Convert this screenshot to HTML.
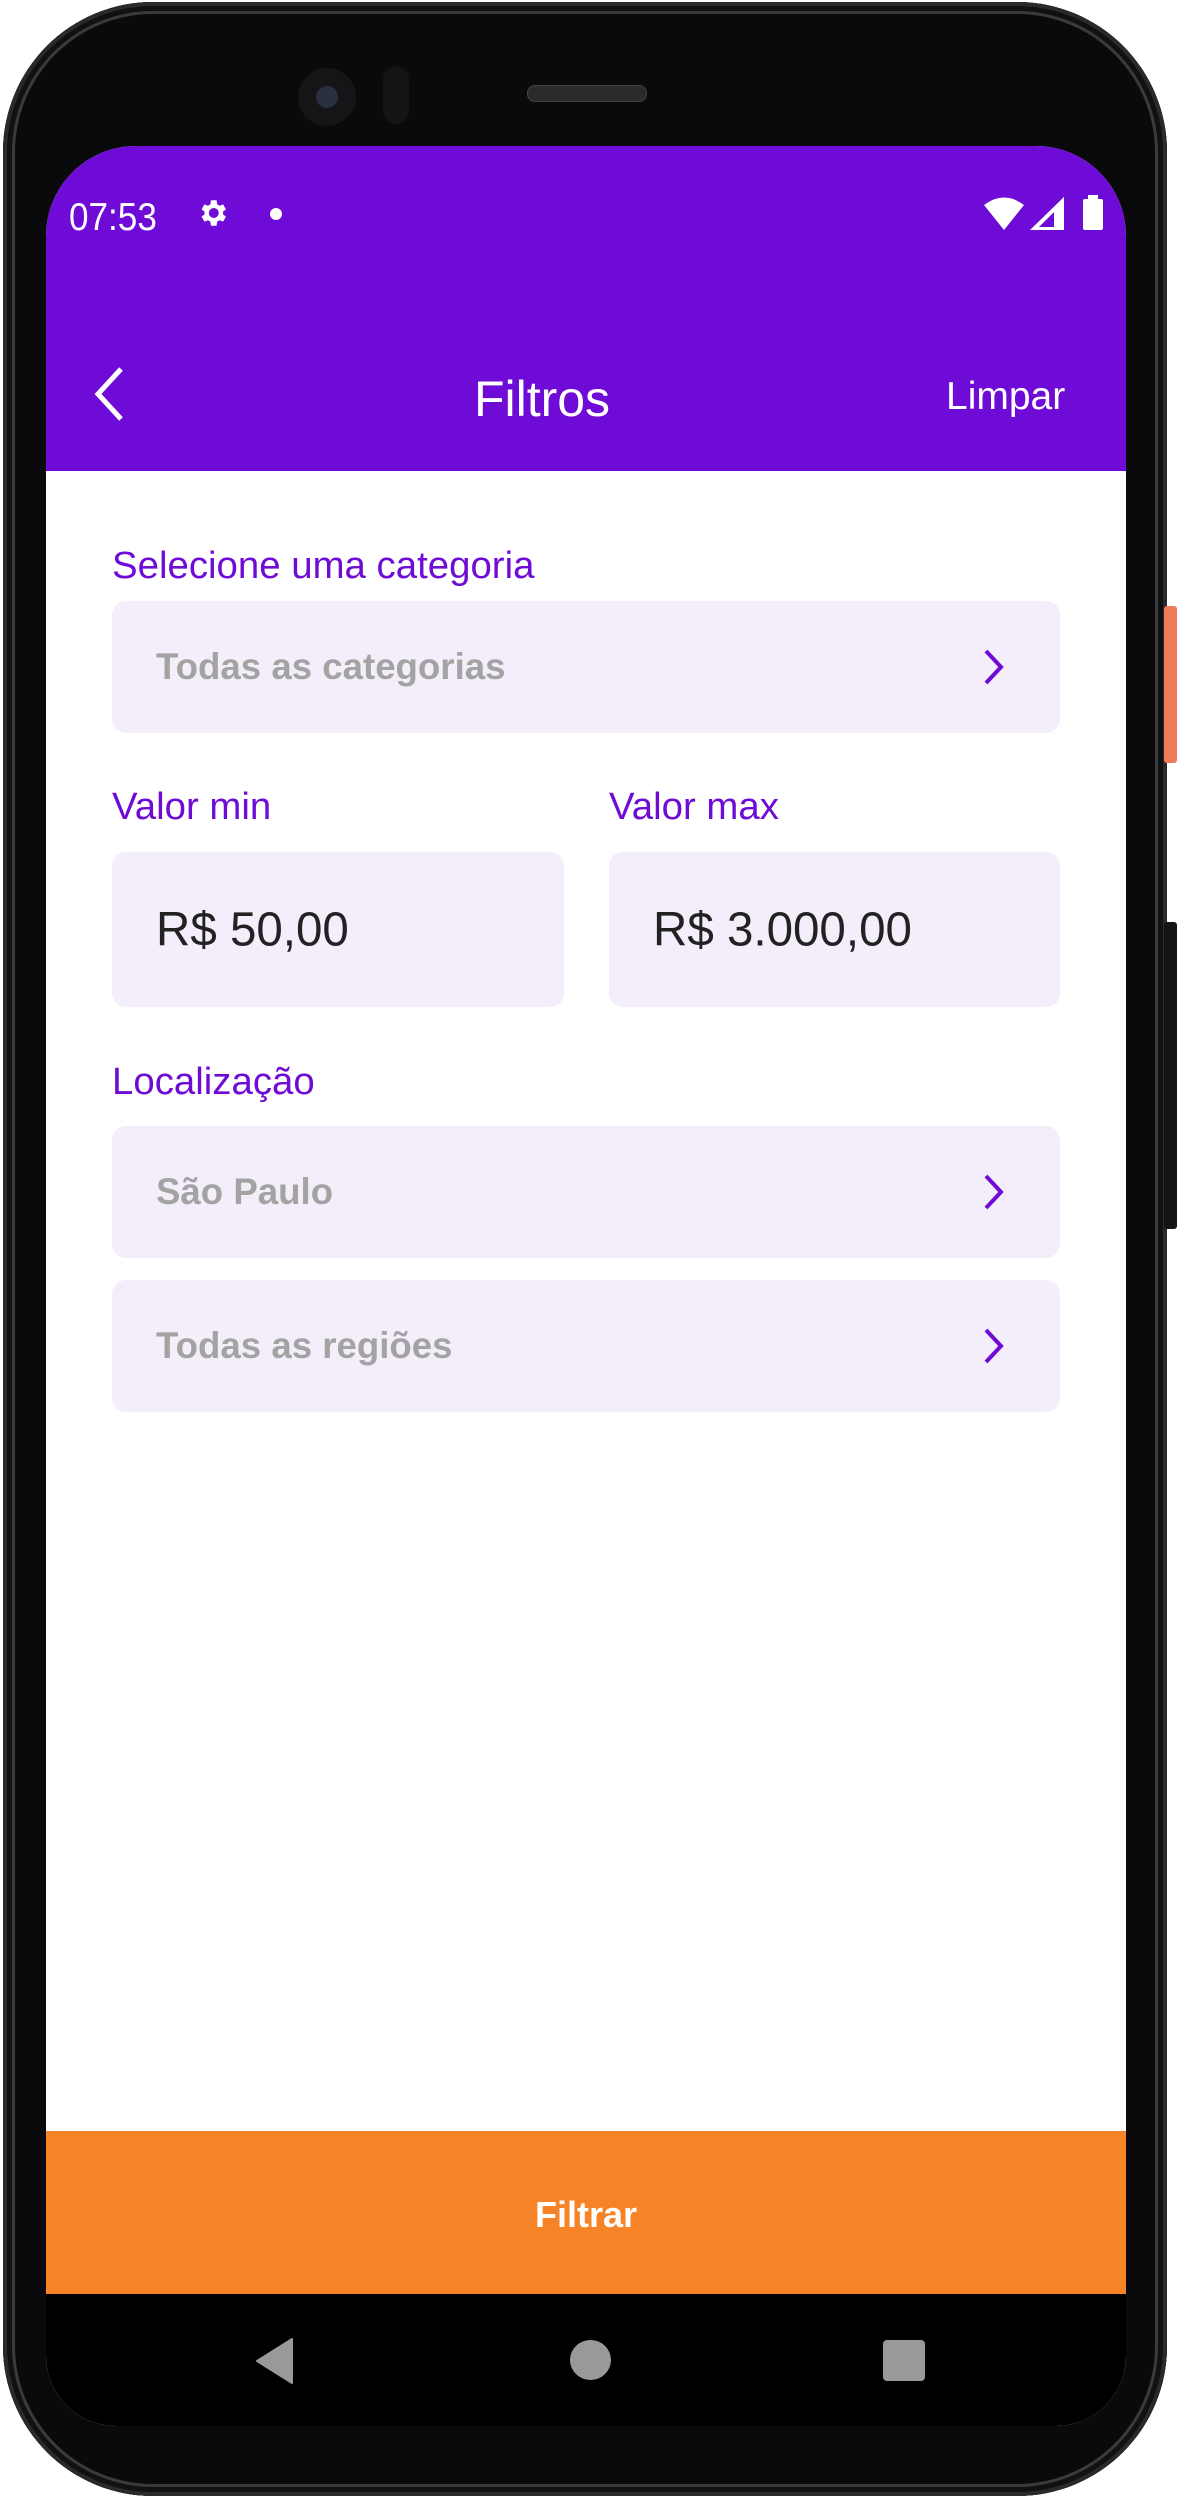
<!DOCTYPE html>
<html><head><meta charset="utf-8"><style>
*{margin:0;padding:0;box-sizing:border-box}
html,body{width:1178px;height:2498px;background:#fff;overflow:hidden;position:relative;font-family:"Liberation Sans",sans-serif}
.abs{position:absolute}
.phone{left:3px;top:2px;width:1164px;height:2494px;border-radius:150px;background:#0a090b;box-shadow:inset 0 0 0 4px #2a2a2c,inset 0 0 0 9px #111,inset 0 0 0 12px #3a3a3c}
.screen{left:46px;top:146px;width:1080px;height:2280px;border-radius:90px 90px 70px 70px;overflow:hidden;background:#fff}
.lbl{position:absolute;color:#6f0bd6;font-size:38px;transform:scaleX(1.01);transform-origin:left center}
.box{position:absolute;background:#f3eefa;border-radius:14px}
.ph{position:absolute;left:44px;top:50%;transform:translateY(-50%) scaleX(.99);transform-origin:left center;color:#a3a3a3;font-size:37px;font-weight:bold;white-space:nowrap}
.val{position:absolute;left:44px;top:50%;transform:translateY(-50%) scaleX(.99);transform-origin:left center;color:#222;font-size:48px;white-space:nowrap}
.chev{position:absolute;right:55px;top:50%;margin-top:-19px}
</style></head><body>
<div class="abs phone"></div>
<div class="abs" style="left:1164px;top:606px;width:13px;height:157px;background:#ef7b5a;border-radius:3px"></div>
<div class="abs" style="left:1164px;top:922px;width:13px;height:307px;background:#141414;border-radius:3px"></div>
<div class="abs" style="left:298px;top:68px;width:58px;height:58px;border-radius:50%;background:#151518"></div>
<div class="abs" style="left:316px;top:86px;width:22px;height:22px;border-radius:50%;background:#2a3040"></div>
<div class="abs" style="left:383px;top:66px;width:26px;height:58px;border-radius:13px;background:#141416"></div>
<div class="abs" style="left:527px;top:85px;width:120px;height:17px;border-radius:8px;background:#2a2a2c;border:1px solid #444"></div>

<div class="abs screen">
  <div class="abs" style="left:0;top:0;width:1080px;height:325px;background:#6f0bd6"></div>
  <div class="abs" style="left:23px;top:50px;color:#fff;font-size:39px;transform:scaleX(.9);transform-origin:left">07:53</div>
  <svg class="abs" style="left:148px;top:50px" width="37" height="34" viewBox="0 0 24 24"><path fill="#fff" d="M19.4 13a7.5 7.5 0 0 0 0-2l2.1-1.6-2-3.5-2.5 1a7 7 0 0 0-1.7-1L14.9 3h-4l-.4 2.9a7 7 0 0 0-1.7 1l-2.5-1-2 3.5L6.4 11a7.5 7.5 0 0 0 0 2l-2.1 1.6 2 3.5 2.5-1a7 7 0 0 0 1.7 1l.4 2.9h4l.4-2.9a7 7 0 0 0 1.7-1l2.5 1 2-3.5zM12.9 15.5a3.5 3.5 0 1 1 0-7 3.5 3.5 0 0 1 0 7z"/></svg>
  <div class="abs" style="left:224px;top:62px;width:12px;height:12px;border-radius:50%;background:#fff"></div>
  <svg class="abs" style="left:937px;top:50px" width="42" height="34" viewBox="0 0 42 34"><path fill="#fff" d="M21 34 1 9Q21-6 41 9z"/></svg>
  <svg class="abs" style="left:984px;top:51px" width="34" height="33" viewBox="0 0 34 33"><path fill="#fff" d="M34 0V33H0zM31 8 9 30H31z"/><path fill="#fff" d="M34 0V33H24V11z"/></svg>
  <div class="abs" style="left:1037px;top:53px;width:20px;height:31px;background:#fff;border-radius:2px"></div>
  <div class="abs" style="left:1042px;top:49px;width:10px;height:5px;background:#fff"></div>

  <svg class="abs" style="left:44px;top:220px" width="36" height="56" viewBox="0 0 36 56"><path d="M31 3 8 28l23 25" fill="none" stroke="#fff" stroke-width="5"/></svg>
  <div class="abs" style="left:396px;top:224px;width:200px;text-align:center;color:#fff;font-size:50px">Filtros</div>
  <div class="abs" style="left:900px;top:229px;color:#fff;font-size:39px">Limpar</div>

  <div class="lbl" style="left:66px;top:399px">Selecione uma categoria</div>
  <div class="box" style="left:66px;top:455px;width:948px;height:132px"><div class="ph">Todas as categorias</div><svg class="chev" width="22" height="38" viewBox="0 0 22 38"><path d="M3 3l15 16L3 35" fill="none" stroke="#6f0bd6" stroke-width="4"/></svg></div>

  <div class="lbl" style="left:66px;top:640px">Valor min</div>
  <div class="lbl" style="left:563px;top:640px">Valor max</div>
  <div class="box" style="left:66px;top:706px;width:452px;height:155px"><div class="val">R$ 50,00</div></div>
  <div class="box" style="left:563px;top:706px;width:451px;height:155px"><div class="val">R$ 3.000,00</div></div>

  <div class="lbl" style="left:66px;top:915px">Localização</div>
  <div class="box" style="left:66px;top:980px;width:948px;height:132px"><div class="ph">São Paulo</div><svg class="chev" width="22" height="38" viewBox="0 0 22 38"><path d="M3 3l15 16L3 35" fill="none" stroke="#6f0bd6" stroke-width="4"/></svg></div>
  <div class="box" style="left:66px;top:1134px;width:948px;height:132px"><div class="ph">Todas as regiões</div><svg class="chev" width="22" height="38" viewBox="0 0 22 38"><path d="M3 3l15 16L3 35" fill="none" stroke="#6f0bd6" stroke-width="4"/></svg></div>

  <div class="abs" style="left:0;top:1985px;width:1080px;height:163px;background:#f68426"></div>
  <div class="abs" style="left:0;top:2048px;width:1080px;text-align:center;color:#fff;font-size:36px;font-weight:bold">Filtrar</div>
  <div class="abs" style="left:0;top:2148px;width:1080px;height:140px;background:#000"></div>
  <svg class="abs" style="left:209px;top:2192px" width="38" height="46" viewBox="0 0 38 46"><path d="M37 1V45L2 23z" fill="#999" stroke="#999" stroke-width="2" stroke-linejoin="round"/></svg>
  <div class="abs" style="left:524px;top:2194px;width:41px;height:40px;border-radius:50%;background:#999"></div>
  <div class="abs" style="left:837px;top:2194px;width:42px;height:41px;border-radius:4px;background:#999"></div>
</div>
</body></html>
